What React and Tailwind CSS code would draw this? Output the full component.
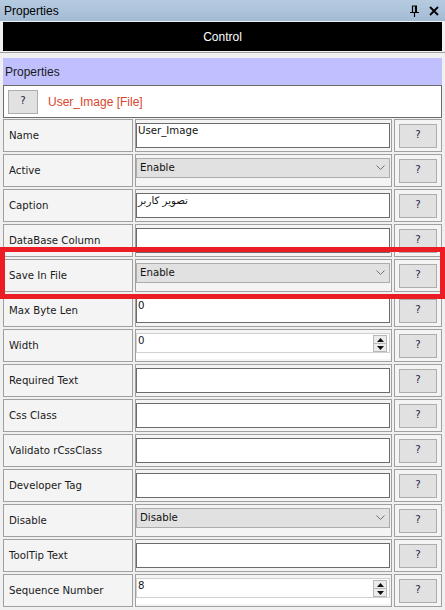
const rows = [
  { label: 'Name', kind: 'text', value: 'User_Image' },
  { label: 'Active', kind: 'select', value: 'Enable' },
  { label: 'Caption', kind: 'text', value: 'تصویر کاربر' },
  { label: 'DataBase Column', kind: 'text', value: '' },
  { label: 'Save In File', kind: 'select', value: 'Enable' },
  { label: 'Max Byte Len', kind: 'text', value: '0' },
  { label: 'Width', kind: 'number', value: '0' },
  { label: 'Required Text', kind: 'text', value: '' },
  { label: 'Css Class', kind: 'text', value: '' },
  { label: 'Validato rCssClass', kind: 'text', value: '' },
  { label: 'Developer Tag', kind: 'text', value: '' },
  { label: 'Disable', kind: 'select', value: 'Disable' },
  { label: 'ToolTip Text', kind: 'text', value: '' },
  { label: 'Sequence Number', kind: 'number', value: '8' },
];

const uiFont = { fontFamily: '"Liberation Sans", Arial, sans-serif' };

function HelpButton({ className = '' }) {
  return (
    <div className={`flex items-center justify-center border border-[#adadad] bg-[#e1e1e1] pb-[1px] text-[#1c1c4c] ${className}`}>
      ?
    </div>
  );
}

function Field({ kind, value }) {
  if (kind === 'select') {
    return (
      <div className="flex h-[20px] items-center justify-between border border-[#acacac] bg-[#e1e1e1] pl-[3px] pr-[4px] text-[#111]">
        <span>{value}</span>
        <svg width="9" height="6" viewBox="0 0 9 6" className="text-[#707070]">
          <path d="M0.5 0.5 L4.5 4.5 L8.5 0.5" fill="none" stroke="currentColor" strokeWidth="1" />
        </svg>
      </div>
    );
  }
  if (kind === 'number') {
    return (
      <div className="h-[26px] bg-white">
        <div className="flex h-[20px] items-start justify-between border border-[#d0d0d0] bg-white pl-[1px] pr-[2px]">
          <span className="leading-[13px]">{value}</span>
          <div className="mt-[1px] flex h-[17px] w-[14px] flex-col border border-[#b8b8b8] bg-[#ececec]">
            <div className="flex flex-1 items-center justify-center border-b border-[#b8b8b8]">
              <svg width="7" height="4" viewBox="0 0 7 4"><path d="M3.5 0 L7 4 L0 4 Z" fill="#111" /></svg>
            </div>
            <div className="flex flex-1 items-center justify-center">
              <svg width="7" height="4" viewBox="0 0 7 4"><path d="M0 0 L7 0 L3.5 4 Z" fill="#111" /></svg>
            </div>
          </div>
        </div>
      </div>
    );
  }
  return (
    <div className="h-[25px] border border-[#6b6b6b] bg-white pl-[1px] leading-[13px] text-[#111]">
      {value}
    </div>
  );
}

export default function App() {
  return (
    <div
      className="relative h-[610px] w-[445px] overflow-hidden bg-[#f0f0f0] text-[10.2px] text-[#1a1a1a]"
      style={{ fontFamily: '"DejaVu Sans", "Liberation Sans", sans-serif' }}
    >
      <div className="flex h-[21px] items-center justify-between bg-gradient-to-b from-[#b6cbe0] to-[#a2bbd4] pl-[4px] pr-[6px]">
        <span className="text-[12px] text-black" style={uiFont}>Properties</span>
        <div className="flex items-center gap-[10px]">
          <svg width="9" height="12" viewBox="0 0 9 12">
            <path d="M2.5 1 V7 M5.5 1 V7 M2 1 H7 M0 7.5 H9 M4.5 7.5 V12" fill="none" stroke="#000" strokeWidth="1.2" />
            <rect x="5" y="1" width="2" height="6" fill="#000" />
          </svg>
          <svg width="10" height="10" viewBox="0 0 10 10">
            <path d="M1 1 L9 9 M9 1 L1 9" stroke="#000" strokeWidth="1.8" />
          </svg>
        </div>
      </div>

      <div className="mx-[3px] mt-[1px] flex h-[29px] items-center justify-center bg-black text-[12px] text-white" style={uiFont}>
        Control
      </div>
      <div className="mt-[1px] h-[2px] border-t border-[#a0a0a0] border-b-white" />
      <div className="mx-[3px] mt-[4px] flex h-[27px] items-center bg-[#c0c0ff] pl-[2px] text-[12px]" style={uiFont}>
        Properties
      </div>
      <div className="mx-[3px] flex h-[33px] items-center gap-[10px] border border-[#6b6b6b] bg-white pl-[4px]">
        <HelpButton className="h-[24px] w-[30px]" />
        <span className="text-[12px] text-[#d8452c]" style={uiFont}>User_Image [File]</span>
      </div>

      <div className="mx-[3px] mt-[1px] flex flex-col gap-[2px]">
        {rows.map((row) => (
          <div key={row.label} className="flex h-[33px] gap-[2px]">
            <div className="flex w-[130px] items-center border border-[#a0a0a0] bg-[#f4f4f4] pl-[5px]">
              {row.label}
            </div>
            <div className="flex-1 border border-[#a0a0a0] bg-[#f4f4f4] pr-[1px] pt-[3px]">
              <Field kind={row.kind} value={row.value} />
            </div>
            <div className="flex w-[48px] items-center justify-center border border-[#a0a0a0] bg-[#f4f4f4]">
              <HelpButton className="h-[24px] w-[38px]" />
            </div>
          </div>
        ))}
      </div>

      <div className="absolute left-0 top-[247px] h-[52px] w-[445px] border-[5px] border-[#ec1c24]" />
    </div>
  );
}
